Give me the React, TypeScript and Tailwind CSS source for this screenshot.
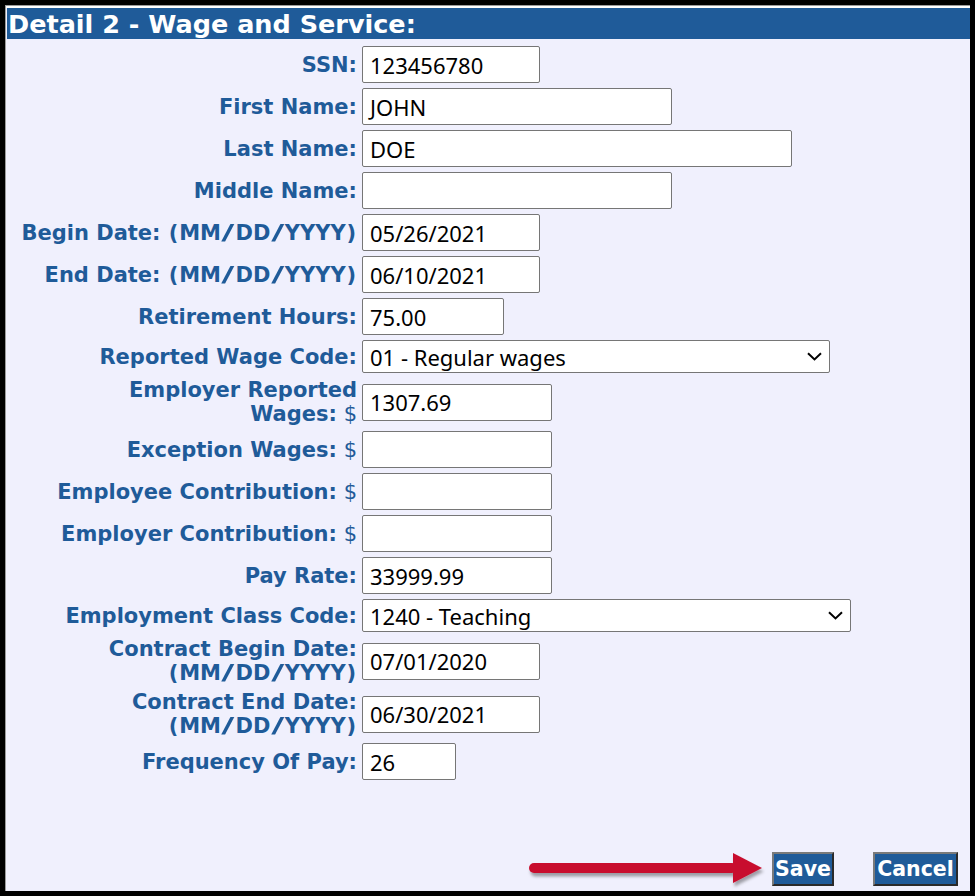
import React from "react";

type Row = {
  lines: string[];
  dollar?: boolean;
  kind: "input" | "select";
  w: string;
  value: string;
};

const rows: Row[] = [
  { lines: ["SSN:"], kind: "input", w: "w-[178px]", value: "123456780" },
  { lines: ["First Name:"], kind: "input", w: "w-[310px]", value: "JOHN" },
  { lines: ["Last Name:"], kind: "input", w: "w-[430px]", value: "DOE" },
  { lines: ["Middle Name:"], kind: "input", w: "w-[310px]", value: "" },
  { lines: ["Begin Date: (MM/DD/YYYY)"], kind: "input", w: "w-[178px]", value: "05/26/2021" },
  { lines: ["End Date: (MM/DD/YYYY)"], kind: "input", w: "w-[178px]", value: "06/10/2021" },
  { lines: ["Retirement Hours:"], kind: "input", w: "w-[142px]", value: "75.00" },
  { lines: ["Reported Wage Code:"], kind: "select", w: "w-[468px]", value: "01 - Regular wages" },
  { lines: ["Employer Reported", "Wages:"], dollar: true, kind: "input", w: "w-[190px]", value: "1307.69" },
  { lines: ["Exception Wages:"], dollar: true, kind: "input", w: "w-[190px]", value: "" },
  { lines: ["Employee Contribution:"], dollar: true, kind: "input", w: "w-[190px]", value: "" },
  { lines: ["Employer Contribution:"], dollar: true, kind: "input", w: "w-[190px]", value: "" },
  { lines: ["Pay Rate:"], kind: "input", w: "w-[190px]", value: "33999.99" },
  { lines: ["Employment Class Code:"], kind: "select", w: "w-[489px]", value: "1240 - Teaching" },
  { lines: ["Contract Begin Date:", "(MM/DD/YYYY)"], kind: "input", w: "w-[178px]", value: "07/01/2020" },
  { lines: ["Contract End Date:", "(MM/DD/YYYY)"], kind: "input", w: "w-[178px]", value: "06/30/2021" },
  { lines: ["Frequency Of Pay:"], kind: "input", w: "w-[94px]", value: "26" },
];

function LabelText({ text }: { text: string }) {
  const parts = text.split(/([/()])/);
  return (
    <>
      {parts.map((p, i) => {
        if (p === "/")
          return (
            <span key={i} className="mx-[3.4px] inline-block scale-x-[1.7]">
              /
            </span>
          );
        if (p === "(" || p === ")")
          return (
            <span key={i} className="mx-[0.9px]">
              {p}
            </span>
          );
        return <React.Fragment key={i}>{p}</React.Fragment>;
      })}
    </>
  );
}

function Field({ row }: { row: Row }) {
  if (row.kind === "select") {
    return (
      <div className={`relative h-[33px] ${row.w}`}>
        <div className="flex h-full w-full items-center rounded-[2px] border border-[#767676] bg-white pl-[7px] font-['Noto_Sans',sans-serif] text-[22px] leading-none text-black">
          {row.value}
        </div>
        <svg
          className="absolute right-[8px] top-[12px]"
          width="15"
          height="9"
          viewBox="0 0 15 9"
          fill="none"
        >
          <path d="M1 1.2 L7.5 7.4 L14 1.2" stroke="#000" strokeWidth="2" />
        </svg>
      </div>
    );
  }
  return (
    <div
      className={`flex h-[37px] ${row.w} items-center rounded-[2px] border border-[#767676] bg-white pl-[7px] font-['Noto_Sans',sans-serif] text-[22px] leading-none text-black`}
    >
      {row.value}
    </div>
  );
}

export default function App() {
  return (
    <div className="relative h-[896px] w-[975px] bg-black p-[5px]">
      <div className="flex h-full w-full flex-col border-l border-t border-[#9c9c9c] bg-[#f0f0fd]">
        <div className="h-[2px] w-full bg-white" />
        <div className="ml-[1px] flex h-[31px] items-center bg-[#1f5b99] pl-[1px] pt-[2px] font-['DejaVu_Sans',sans-serif] text-[25.5px] font-bold leading-none text-white">
          Detail 2 - Wage and Service:
        </div>
        <div className="flex flex-col gap-[5px] pt-[7px]">
          {rows.map((row, i) => (
            <div key={i} className="flex items-center">
              <div className="w-[351px] text-right font-['DejaVu_Sans',sans-serif] text-[21px] leading-[24px] text-[#1f5b99]">
                {row.lines.map((l, j) => (
                  <div key={j} className="whitespace-nowrap">
                    <span className="font-bold">
                      <LabelText text={l} />
                    </span>
                    {row.dollar && j === row.lines.length - 1 ? <span> $</span> : null}
                  </div>
                ))}
              </div>
              <div className="ml-[5px]">
                <Field row={row} />
              </div>
            </div>
          ))}
        </div>
        <div className="flex-1" />
        <div className="flex justify-end gap-[39px] pb-[5px] pr-[12px]">
          <button className="flex h-[34px] w-[62px] items-center justify-center border-[2.5px] border-b-[#2a2a2a] border-l-[#7a7a7a] border-r-[#2a2a2a] border-t-[#7a7a7a] bg-[#1f5b99] font-['DejaVu_Sans',sans-serif] text-[20.5px] font-bold leading-none text-white">
            Save
          </button>
          <button className="flex h-[34px] w-[85px] items-center justify-center border-[2.5px] border-b-[#2a2a2a] border-l-[#7a7a7a] border-r-[#2a2a2a] border-t-[#7a7a7a] bg-[#1f5b99] font-['DejaVu_Sans',sans-serif] text-[20.5px] font-bold leading-none text-white">
            Cancel
          </button>
        </div>
      </div>
      <svg
        className="absolute left-[525px] top-[848px]"
        width="245"
        height="42"
        viewBox="0 0 245 42"
      >
        <defs>
          <filter id="sh" x="-10%" y="-40%" width="120%" height="200%">
            <feDropShadow dx="1.5" dy="3.5" stdDeviation="1.8" floodColor="#000" floodOpacity="0.35" />
          </filter>
        </defs>
        <g filter="url(#sh)">
          <rect x="4" y="15" width="208" height="10" rx="5" fill="#c8102e" />
          <polygon points="208,5 237,20 208,35" fill="#c8102e" />
        </g>
      </svg>
    </div>
  );
}
